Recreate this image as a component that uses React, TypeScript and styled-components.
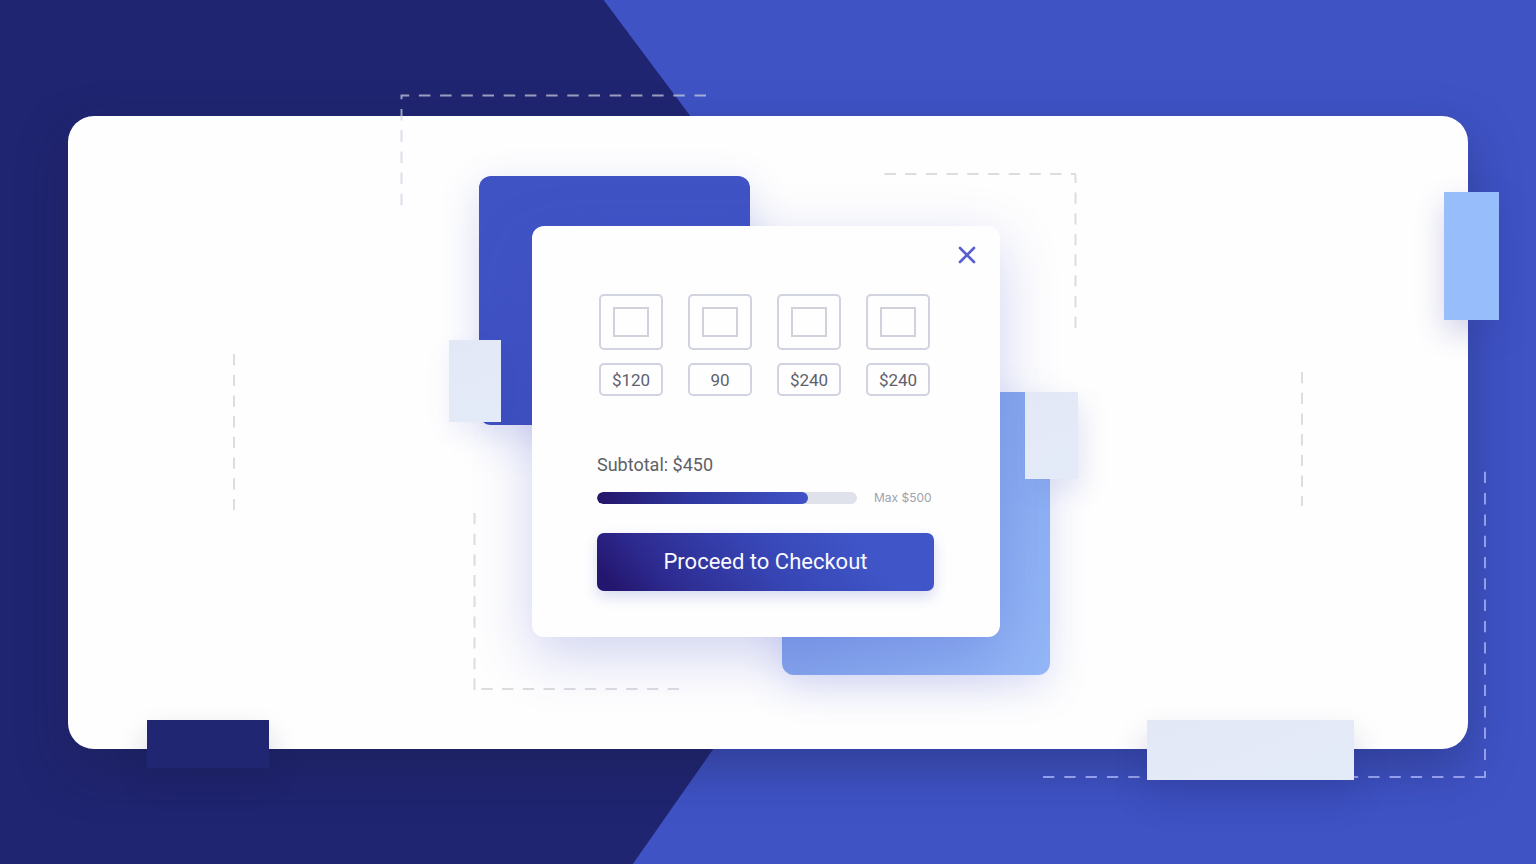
import React from "react";
import styled, { createGlobalStyle } from "styled-components";

const GlobalStyle = createGlobalStyle`
  *, *::before, *::after { box-sizing: border-box; }
  body { margin: 0; font-family: Roboto, Inter, "Liberation Sans", sans-serif; }
`;

const Page = styled.div`
  position: relative;
  display: flex;
  min-height: 100vh;
  padding: 116px 68px 115px;
  overflow: hidden;
  background: #3f53c5;
`;

const NavyWedge = styled.div`
  position: absolute;
  inset: 0;
  background: #202571;
  clip-path: polygon(0 0, 39.3% 0, 60.6% 50.7%, 41.2% 100%, 0 100%);
`;

const Panel = styled.main`
  position: relative;
  flex: 1;
  display: flex;
  align-items: center;
  justify-content: center;
  padding: 0 4px 2px 0;
  border-radius: 26px;
  background: #fefefe;
  box-shadow: 0 20px 50px rgba(24, 28, 70, 0.36);
`;

const Block = styled.div<{ $w: number; $h: number; $fill: string; $shadow: string }>`
  position: absolute;
  width: ${(p) => p.$w}px;
  height: ${(p) => p.$h}px;
  background: ${(p) => p.$fill};
  box-shadow: ${(p) => p.$shadow};
`;

const NavyBlock = styled(Block)`
  left: 79px;
  bottom: -19px;
`;

const SkyBlock = styled(Block)`
  right: -31px;
  top: 76px;
`;

const MistBlock = styled(Block)`
  right: 114px;
  bottom: -31px;
`;

const RoyalCard = styled(Block)`
  left: -53px;
  top: -50px;
  border-radius: 12px;
`;

const SkyCard = styled(Block)`
  right: -50px;
  bottom: -38px;
  border-radius: 12px;
`;

const LeftTab = styled(Block)`
  left: -83px;
  top: 114px;
`;

const RightTab = styled(Block)`
  right: -78px;
  top: 166px;
`;

const Dashes = styled.svg`
  position: absolute;
  overflow: visible;
  fill: none;
  stroke-width: 2;
  pointer-events: none;
`;

const StageDashes = styled(Dashes)`
  left: 0;
  top: 0;
`;

const CornerDashes = styled(Dashes)`
  right: 0;
  bottom: 0;
`;

const Stage = styled.div`
  position: relative;
  width: 468px;
`;

const Dialog = styled.section`
  position: relative;
  display: flex;
  flex-direction: column;
  padding: 68px 66px 46px 65px;
  border-radius: 12px;
  background: #fefefe;
  box-shadow: 0 18px 56px rgba(66, 78, 200, 0.25);
`;

const CloseButton = styled.button`
  position: absolute;
  top: 17px;
  right: 21px;
  display: grid;
  place-items: center;
  width: 24px;
  height: 24px;
  padding: 0;
  border: 0;
  background: none;
  color: #5a5fd0;
  cursor: pointer;
`;

const Items = styled.ul`
  display: flex;
  justify-content: space-between;
  margin: 0;
  padding: 0 4px 0 2px;
  list-style: none;
`;

const Item = styled.li`
  display: flex;
  flex-direction: column;
  gap: 13px;
  width: 64px;
`;

const Thumb = styled.div`
  display: grid;
  place-items: center;
  height: 56px;
  border: 2px solid #d1d3de;
  border-radius: 5px;

  &::after {
    content: "";
    width: 36px;
    height: 30px;
    border: 2px solid #d1d1dc;
  }
`;

const Price = styled.div`
  height: 33px;
  border: 2px solid #d1d4e0;
  border-radius: 5px;
  color: #5f616d;
  font-size: 17px;
  line-height: 30px;
  text-align: center;
`;

const Subtotal = styled.label`
  margin-top: 57px;
  color: #5f6066;
  font-size: 18px;
  line-height: 24px;
`;

const Meter = styled.div`
  display: flex;
  align-items: center;
  gap: 17px;
  margin-top: 13px;
`;

const Bar = styled.progress`
  appearance: none;
  flex: 1;
  min-width: 0;
  height: 12px;
  border: 0;
  border-radius: 6px;
  overflow: hidden;
  background: #dfe2eb;

  &::-webkit-progress-bar {
    background: #dfe2eb;
  }
  &::-webkit-progress-value {
    border-radius: 6px;
    background: linear-gradient(90deg, #241669, #3038a0 45%, #4053c7);
  }
`;

const Limit = styled.span`
  flex: 0 0 60px;
  color: #a0a2ab;
  font-family: Inter, Roboto, sans-serif;
  font-size: 12px;
  line-height: 16px;
  white-space: nowrap;
`;

const Checkout = styled.button`
  height: 58px;
  margin-top: 27px;
  padding: 0;
  border: 0;
  border-radius: 7px;
  background: linear-gradient(50deg, #24166f 5%, #2d2a8f 20%, #3745b4 50%, #4056c8 80%);
  box-shadow: 0 6px 14px rgba(62, 78, 190, 0.2);
  color: #f8f9ff;
  font-family: inherit;
  font-size: 22px;
  line-height: 28px;
  cursor: pointer;
`;

const items = [
  { id: 1, price: "$120" },
  { id: 2, price: "90" },
  { id: 3, price: "$240" },
  { id: 4, price: "$240" },
];

const pale = "linear-gradient(160deg, #e3e8f6, #e4ebf8)";

export default function App() {
  return (
    <Page>
      <NavyWedge />
      <Panel>
        <Stage>
          <RoyalCard
            $w={271}
            $h={249}
            $fill="linear-gradient(165deg, #4053c5 30%, #3c4dbc)"
            $shadow="0 12px 40px rgba(66, 82, 200, 0.2)"
          />
          <SkyCard
            $w={268}
            $h={283}
            $fill="linear-gradient(120deg, #84a4ec 40%, #94b7f7)"
            $shadow="0 12px 40px rgba(80, 96, 210, 0.2)"
          />
          <StageDashes width="468" height="411" aria-hidden="true" strokeDasharray="11.3 9.4">
            <path stroke="rgba(208, 209, 224, 0.7)" strokeDasharray="11.5 9.7" d="M174 -130.5H-130.5V-20" />
            <g stroke="#dcdce1">
              <path d="M352.5 -52H544M543.5 102V-51" />
              <path d="M-57.5 287V464M147 463H-52" />
              <path d="M-298 128V286" />
              <path d="M770 146V280" />
            </g>
          </StageDashes>
          <Dialog aria-label="Cart">
            <CloseButton type="button" aria-label="Close">
              <svg width="18" height="18" viewBox="0 0 18 18" fill="none" stroke="currentColor" strokeWidth="2.7" strokeLinecap="round">
                <path d="M2 2L16 16M16 2L2 16" />
              </svg>
            </CloseButton>
            <Items>
              {items.map((item) => (
                <Item key={item.id}>
                  <Thumb />
                  <Price>{item.price}</Price>
                </Item>
              ))}
            </Items>
            <Subtotal htmlFor="subtotal">Subtotal: $450</Subtotal>
            <Meter>
              <Bar id="subtotal" max={500} value={405} />
              <Limit>Max $500</Limit>
            </Meter>
            <Checkout type="button">Proceed to Checkout</Checkout>
          </Dialog>
          <LeftTab $w={52} $h={82} $fill={pale} $shadow="-4px 10px 24px rgba(90, 100, 200, 0.06)" />
          <RightTab $w={53} $h={87} $fill={pale} $shadow="8px 12px 24px rgba(90, 100, 200, 0.12)" />
        </Stage>
        <CornerDashes width="100" height="100" aria-hidden="true">
          <g stroke="#929ee9" strokeDasharray="11.3 10">
            <path d="M118 128H-140M-325 128H-215M117 122V129M117 111V-180" />
          </g>
        </CornerDashes>
        <NavyBlock $w={122} $h={48} $fill="#202671" $shadow="0 14px 30px rgba(24, 28, 70, 0.18)" />
        <SkyBlock $w={55} $h={128} $fill="#97bdfb" $shadow="0 12px 30px rgba(50, 60, 160, 0.22)" />
        <MistBlock $w={207} $h={60} $fill={pale} $shadow="0 18px 34px rgba(30, 40, 120, 0.2)" />
      </Panel>
      <GlobalStyle />
    </Page>
  );
}
